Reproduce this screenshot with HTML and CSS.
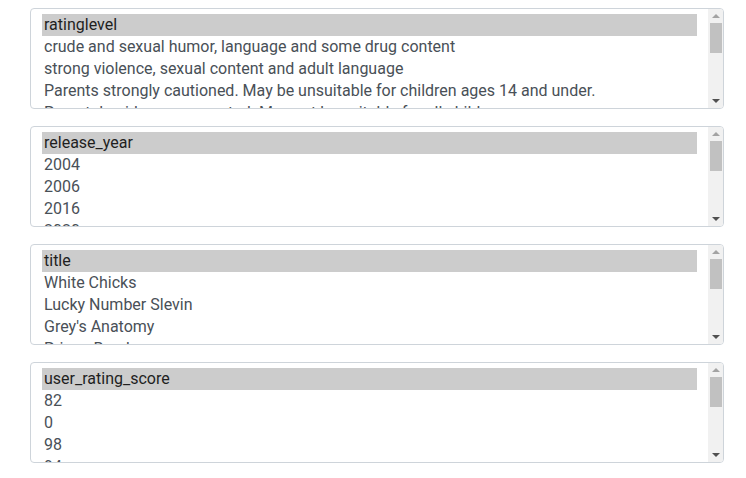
FILE: index.html
```html
<!DOCTYPE html>
<html lang="en">
<head>
<meta charset="utf-8">
<title>Columns</title>
<link rel="stylesheet" href="styles.css">
</head>
<body>
<div class="page">
  <div class="listbox" role="listbox">
    <div class="items">
      <div class="option selected">ratinglevel</div>
      <div class="option">crude and sexual humor, language and some drug content</div>
      <div class="option">strong violence, sexual content and adult language</div>
      <div class="option">Parents strongly cautioned. May be unsuitable for children ages 14 and under.</div>
      <div class="option">Parental guidance suggested. May not be suitable for all children.</div>
      <div class="option">General Audiences. Suitable for all ages.</div>
    </div>
    <div class="scrollbar">
      <div class="btn"><span class="tri-up"></span></div>
      <div class="track"><div class="thumb"></div></div>
      <div class="btn"><span class="tri-down"></span></div>
    </div>
  </div>
  <div class="listbox" role="listbox">
    <div class="items">
      <div class="option selected">release_year</div>
      <div class="option">2004</div>
      <div class="option">2006</div>
      <div class="option">2016</div>
      <div class="option">2020</div>
      <div class="option">2014</div>
    </div>
    <div class="scrollbar">
      <div class="btn"><span class="tri-up"></span></div>
      <div class="track"><div class="thumb"></div></div>
      <div class="btn"><span class="tri-down"></span></div>
    </div>
  </div>
  <div class="listbox" role="listbox">
    <div class="items">
      <div class="option selected">title</div>
      <div class="option">White Chicks</div>
      <div class="option">Lucky Number Slevin</div>
      <div class="option">Grey's Anatomy</div>
      <div class="option">Prison Break</div>
      <div class="option">How I Met Your Mother</div>
    </div>
    <div class="scrollbar">
      <div class="btn"><span class="tri-up"></span></div>
      <div class="track"><div class="thumb"></div></div>
      <div class="btn"><span class="tri-down"></span></div>
    </div>
  </div>
  <div class="listbox" role="listbox">
    <div class="items">
      <div class="option selected">user_rating_score</div>
      <div class="option">82</div>
      <div class="option">0</div>
      <div class="option">98</div>
      <div class="option">94</div>
      <div class="option">90</div>
    </div>
    <div class="scrollbar">
      <div class="btn"><span class="tri-up"></span></div>
      <div class="track"><div class="thumb"></div></div>
      <div class="btn"><span class="tri-down"></span></div>
    </div>
  </div>
</div>
</body>
</html>
```

FILE: styles.css
```css
html, body {
  margin: 0;
  padding: 0;
  background: #ffffff;
}

.page {
  display: flex;
  flex-direction: column;
  gap: 17px;
  padding: 8px 22px 0 30px;
}

.listbox {
  display: flex;
  height: 101px;
  box-sizing: border-box;
  border: 1px solid #ced4da;
  border-radius: 4px;
  background: #ffffff;
  overflow: hidden;
  font-family: Roboto, "Liberation Sans", sans-serif;
  font-size: 16px;
  color: #495057;
}

.items {
  flex: 1;
  min-width: 0;
  padding: 5px 11px;
  overflow: hidden;
}

.option {
  height: 22px;
  line-height: 22px;
  padding: 0 2px;
  white-space: nowrap;
}

.option.selected {
  background: #cccccc;
  color: #1f1f1f;
}

.scrollbar {
  width: 15px;
  flex: none;
  display: flex;
  flex-direction: column;
  background: #f1f1f1;
}

.btn {
  height: 14px;
  flex: none;
  display: flex;
  align-items: center;
  justify-content: center;
}

.tri-up {
  width: 0;
  height: 0;
  border-left: 4px solid transparent;
  border-right: 4px solid transparent;
  border-bottom: 4px solid #a3a3a3;
}

.tri-down {
  width: 0;
  height: 0;
  border-left: 4px solid transparent;
  border-right: 4px solid transparent;
  border-top: 4px solid #505050;
}

.track {
  flex: 1;
  padding: 0 1px 0 2px;
}

.thumb {
  height: 30px;
  background: #c1c1c1;
}
```
